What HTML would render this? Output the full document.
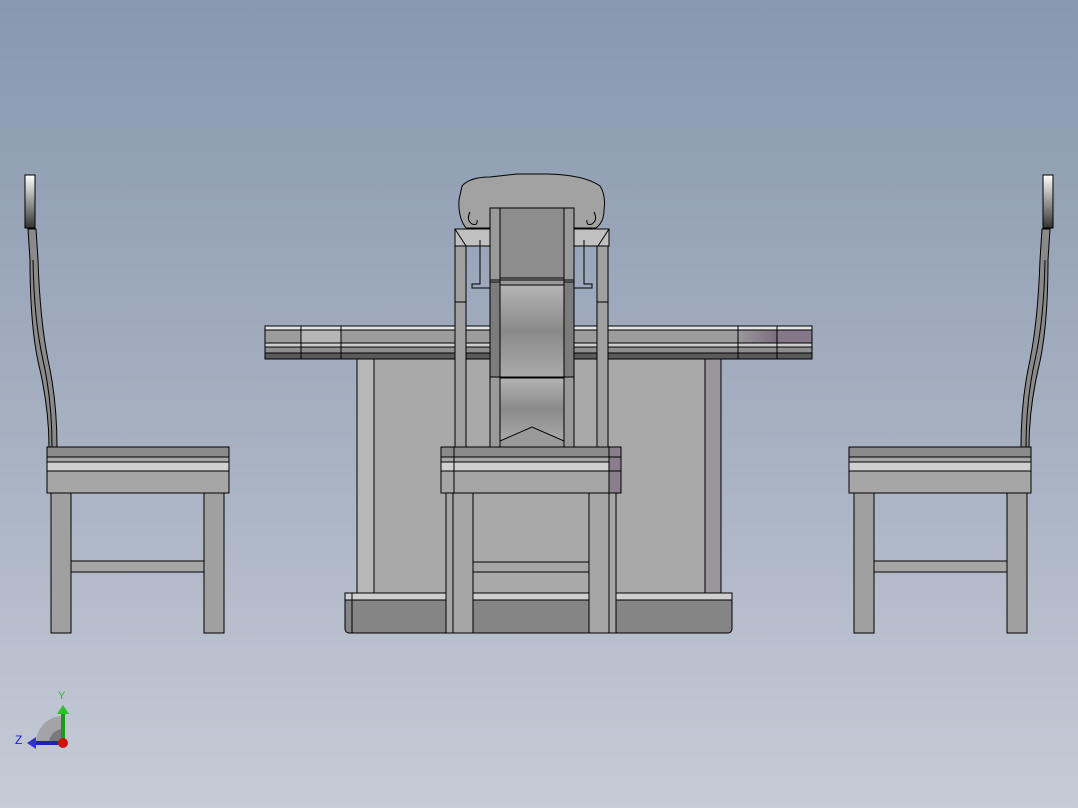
<!DOCTYPE html>
<html><head><style>
html,body{margin:0;padding:0;width:1078px;height:808px;overflow:hidden}
body{background:linear-gradient(#8898ae,#a7b1c2 55%,#c7cbd7)}
svg{position:absolute;left:0;top:0}
text{font-family:"Liberation Sans",sans-serif}
</style></head><body>
<svg width="1078" height="808" viewBox="0 0 1078 808">
<defs>
<linearGradient id="hg" x1="0" y1="0" x2="0" y2="1"><stop offset="0" stop-color="#fff"/><stop offset=".5" stop-color="#999"/><stop offset="1" stop-color="#333"/></linearGradient>
<linearGradient id="pv" x1="0" y1="0" x2="0" y2="1"><stop offset="0" stop-color="#b4b4b4"/><stop offset=".5" stop-color="#8a8a8a"/><stop offset="1" stop-color="#aaa"/></linearGradient>
<linearGradient id="rt" x1="0" y1="0" x2="1" y2="0"><stop offset="0" stop-color="#9a9a9a"/><stop offset=".4" stop-color="#8e8890"/><stop offset="1" stop-color="#7a6e7e"/></linearGradient>
</defs>
<g stroke="#000" stroke-width="1">
<!-- TABLE body -->
<rect x="357" y="359" width="364" height="236" fill="#a9a9a9"/>
<rect x="357" y="359" width="17" height="236" fill="#b8b8b8"/>
<rect x="705" y="359" width="16" height="236" fill="#9a969c"/>
<!-- base -->
<rect x="345" y="593" width="387" height="40" rx="4" fill="#858585"/>
<rect x="345" y="593" width="387" height="7" fill="#cfcfcf"/>
<line x1="352" y1="593" x2="352" y2="633"/>
<!-- table top -->
<rect x="265" y="326" width="547" height="33" fill="#9c9c9c"/>
<rect x="265" y="326" width="547" height="4" fill="#e4e4e4"/>
<rect x="265" y="343" width="547" height="4" fill="#cfcfcf"/>
<rect x="265" y="347" width="547" height="6" fill="#8f8f8f"/>
<rect x="265" y="353" width="547" height="6" fill="#5a5a5a"/>
<rect x="301" y="330" width="40" height="13" fill="#b6b6b6"/>
<rect x="738" y="330" width="39" height="13" fill="url(#rt)"/>
<rect x="777" y="330" width="35" height="13" fill="#857888"/>
<line x1="301" y1="326" x2="301" y2="359"/><line x1="341" y1="326" x2="341" y2="359"/>
<line x1="738" y1="326" x2="738" y2="359"/><line x1="777" y1="326" x2="777" y2="359"/>

<!-- CENTER CHAIR back -->
<path d="M462 186 Q470 177 490 177 L517 174 L548 174 Q585 175 600 186 Q606 195 604 210 Q604 222 596 228 L574 228 L574 208 L490 208 L490 228 L466 228 Q458 218 459 200 Z" fill="#a2a2a2"/>
<path d="M470 212 q-4 8 2 12 q6 2 5 -4 M594 212 q4 8 -2 12 q-6 2 -5 -4" fill="none"/>
<rect x="455" y="229" width="36" height="17" fill="#c0c0c0"/>
<rect x="573" y="229" width="36" height="17" fill="#c0c0c0"/>
<path d="M455 229 L466 246 M609 229 L598 246" fill="none"/>
<rect x="455" y="246" width="11" height="201" fill="#a0a0a0"/>
<rect x="597" y="246" width="11" height="201" fill="#a0a0a0"/>
<line x1="455" y1="302" x2="466" y2="302"/><line x1="597" y1="302" x2="608" y2="302"/>
<path d="M480 240 L480 284 L472 284 L472 288 L490 288" fill="none"/>
<path d="M584 240 L584 284 L592 284 L592 288 L574 288" fill="none"/>
<rect x="490" y="208" width="84" height="239" fill="#9a9a9a"/>
<rect x="500" y="208" width="64" height="70" fill="#8d8d8d"/>
<rect x="490" y="282" width="10" height="95" fill="#7c7c7c"/>
<rect x="564" y="282" width="10" height="95" fill="#7c7c7c"/>
<rect x="500" y="285" width="64" height="92" fill="url(#pv)"/>
<line x1="490" y1="280" x2="574" y2="280"/>
<path d="M500 378 L564 378 L564 441 L532 427 L500 441 Z" fill="url(#pv)"/>
<line x1="500" y1="208" x2="500" y2="447"/><line x1="564" y1="208" x2="564" y2="447"/>
<!-- seat -->
<rect x="441" y="447" width="180" height="46" fill="#a6a6a6"/>
<rect x="441" y="447" width="180" height="10" fill="#8a8a8a"/>
<rect x="441" y="462" width="180" height="9" fill="#d0d0d0"/>
<rect x="609" y="447" width="12" height="46" fill="#8a7e8c"/>
<line x1="441" y1="471" x2="621" y2="471"/><line x1="441" y1="457" x2="621" y2="457"/>
<line x1="454" y1="447" x2="454" y2="493"/>
<rect x="473" y="562" width="116" height="10" fill="#a6a6a6"/>
<rect x="446" y="493" width="27" height="140" fill="#a6a6a6"/>
<rect x="589" y="493" width="27" height="140" fill="#a6a6a6"/>
<line x1="453" y1="493" x2="453" y2="633"/><line x1="609" y1="493" x2="609" y2="633"/>

<!-- LEFT CHAIR -->
<rect x="25" y="175" width="10" height="53" fill="url(#hg)"/>
<path d="M28 229 L36 229 L38 260 Q40 320 48 360 Q57 400 57 447 L49 447 Q49 410 40 370 Q30 330 30 260 Z" fill="#8a8a8a"/>
<path d="M33 260 Q34 320 43 360 Q52 400 52 447" fill="none"/>
<rect x="47" y="447" width="182" height="46" fill="#a6a6a6"/>
<rect x="47" y="447" width="182" height="10" fill="#8a8a8a"/>
<rect x="47" y="462" width="182" height="9" fill="#d0d0d0"/>
<line x1="47" y1="471" x2="229" y2="471"/><line x1="47" y1="457" x2="229" y2="457"/>
<rect x="71" y="561" width="133" height="11" fill="#a6a6a6"/>
<rect x="51" y="493" width="20" height="140" fill="#a0a0a0"/>
<rect x="204" y="493" width="20" height="140" fill="#a0a0a0"/>

<!-- RIGHT CHAIR -->
<g transform="translate(1078,0) scale(-1,1)">
<rect x="25" y="175" width="10" height="53" fill="url(#hg)"/>
<path d="M28 229 L36 229 L38 260 Q40 320 48 360 Q57 400 57 447 L49 447 Q49 410 40 370 Q30 330 30 260 Z" fill="#8a8a8a"/>
<path d="M33 260 Q34 320 43 360 Q52 400 52 447" fill="none"/>
<rect x="47" y="447" width="182" height="46" fill="#a6a6a6"/>
<rect x="47" y="447" width="182" height="10" fill="#8a8a8a"/>
<rect x="47" y="462" width="182" height="9" fill="#d0d0d0"/>
<line x1="47" y1="471" x2="229" y2="471"/><line x1="47" y1="457" x2="229" y2="457"/>
<rect x="71" y="561" width="133" height="11" fill="#a6a6a6"/>
<rect x="51" y="493" width="20" height="140" fill="#a0a0a0"/>
<rect x="204" y="493" width="20" height="140" fill="#a0a0a0"/>
</g>
</g>
<!-- triad -->
<path d="M63 743 L36 743 A27 27 0 0 1 63 716 Z" fill="#a4a4a8"/>
<path d="M63 743 L49 743 A14 14 0 0 1 63 729 Z" fill="#7a7a7e"/>
<rect x="61" y="712" width="4" height="31" fill="#1a9a1a"/>
<path d="M57 714 L63 705 L69 714 Z" fill="#2ac02a"/>
<rect x="34" y="741" width="29" height="4" fill="#2020c0"/>
<path d="M36 737 L27 743 L36 749 Z" fill="#3030e0"/>
<circle cx="63" cy="743" r="5" fill="#d01010"/>
<text x="58" y="699" font-size="11" fill="#20c020">Y</text>
<text x="15" y="744" font-size="12" fill="#2020e0">Z</text>
</svg>
</body></html>
